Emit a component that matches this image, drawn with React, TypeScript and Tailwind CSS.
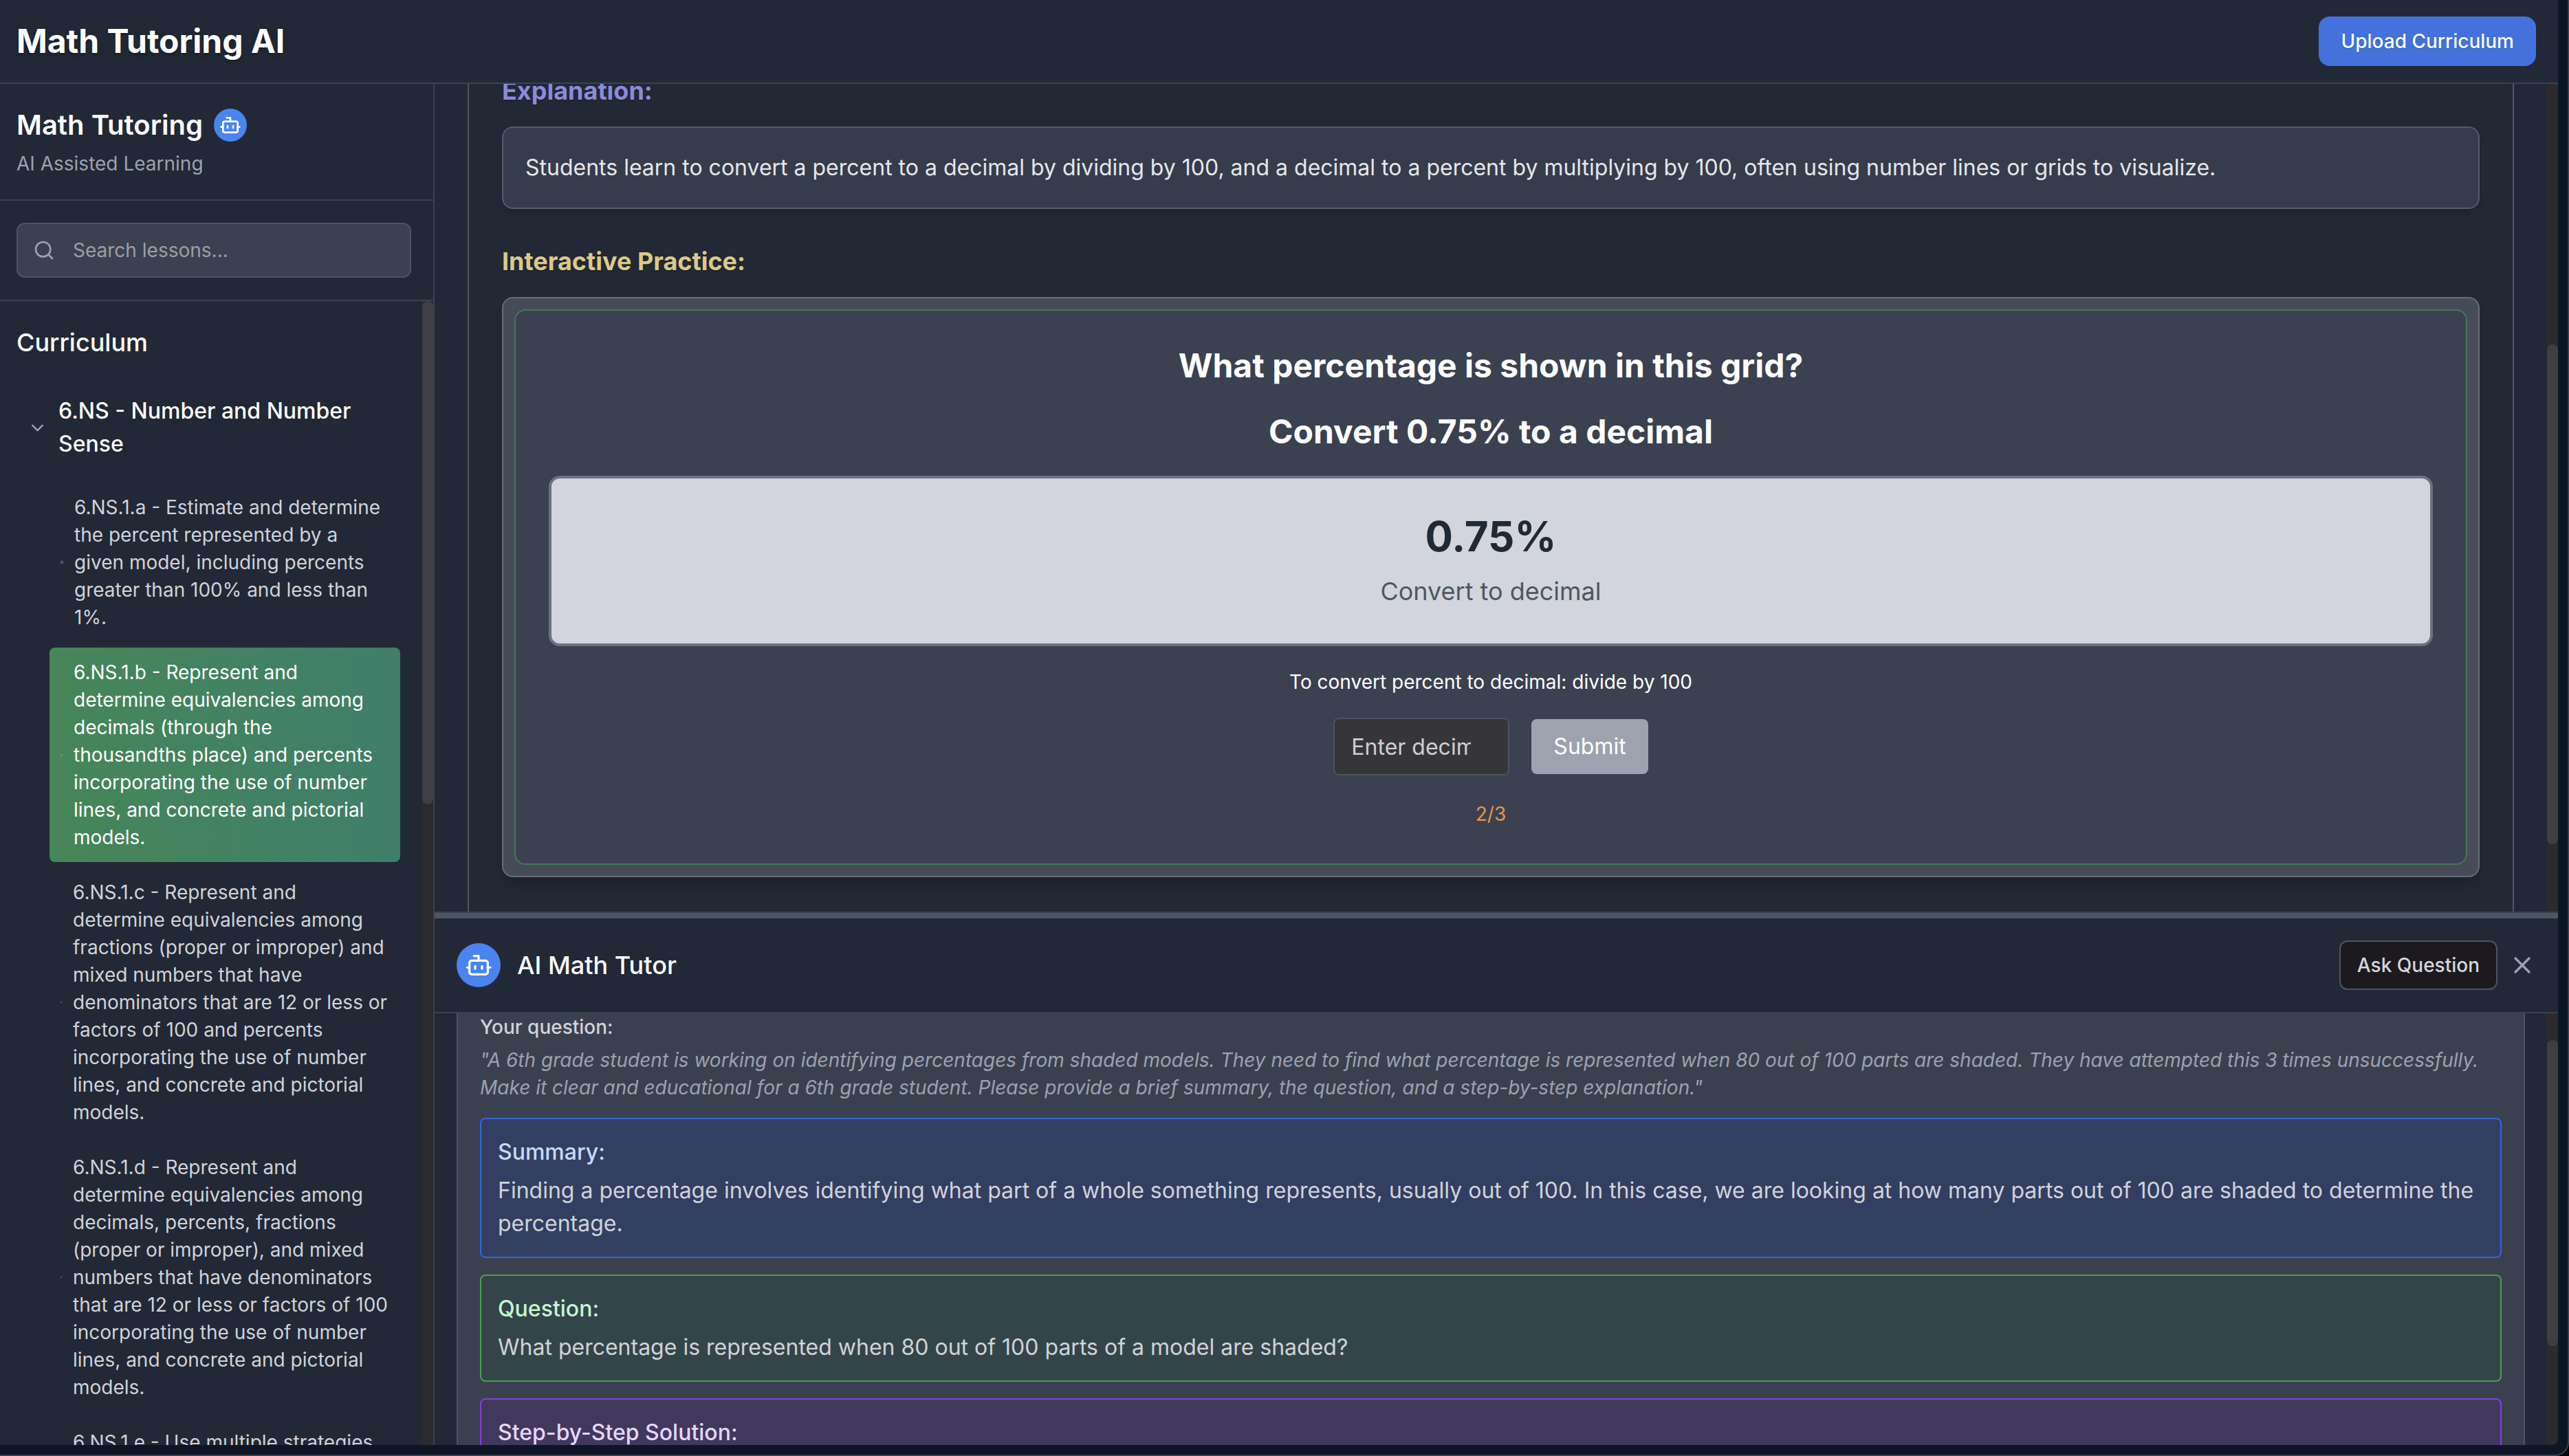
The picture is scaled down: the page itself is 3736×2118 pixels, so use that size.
import React from "react";
import { Bot, ChevronDown, Search, X } from "lucide-react";
import clsx from "clsx";

const lessons = [
  {
    text: "6.NS.1.a - Estimate and determine the percent represented by a given model, including percents greater than 100% and less than 1%.",
    dot: "size-1 border border-[#6b7280]",
  },
  {
    text: "6.NS.1.b - Represent and determine equivalencies among decimals (through the thousandths place) and percents incorporating the use of number lines, and concrete and pictorial models.",
    dot: "size-[3px] rounded-full border border-[#7fae8c]",
    active: true,
  },
  {
    text: "6.NS.1.c - Represent and determine equivalencies among fractions (proper or improper) and mixed numbers that have denominators that are 12 or less or factors of 100 and percents incorporating the use of number lines, and concrete and pictorial models.",
    dot: "size-0.5 bg-[#4b5563]",
  },
  {
    text: "6.NS.1.d - Represent and determine equivalencies among decimals, percents, fractions (proper or improper), and mixed numbers that have denominators that are 12 or less or factors of 100 incorporating the use of number lines, and concrete and pictorial models.",
    dot: "size-0.5 bg-[#4b5563]",
  },
  {
    text: "6.NS.1.e - Use multiple strategies to solve problems.",
    dot: "size-0.5 bg-[#4b5563]",
  },
];

function ScrollTrack({ before, thumb, after }: { before: number; thumb: number; after: number }) {
  return (
    <div className="flex w-4 shrink-0 flex-col bg-[#2c2a2e]" aria-hidden="true">
      <div style={{ flexGrow: before }} />
      <div className="rounded-full bg-[#403e42]" style={{ flexGrow: thumb }} />
      <div style={{ flexGrow: after }} />
    </div>
  );
}

function Sidebar() {
  return (
    <aside className="flex w-[632px] shrink-0 flex-col border-r-2 border-[#3a4150]">
      <div className="border-b-2 border-[#3a4150] py-8 pr-8 pl-6">
        <div className="flex items-center gap-4">
          <h2 className="text-[40px] leading-14 font-semibold">Math Tutoring</h2>
          <span className="flex size-12 items-center justify-center rounded-full bg-[#4a84ee]">
            <Bot className="size-8" />
          </span>
        </div>
        <p className="mt-2 text-[28px] leading-10 text-[#9ca2af]">AI Assisted Learning</p>
      </div>

      <div className="border-b-2 border-[#3a4150] py-8 pr-8 pl-6">
        <label className="flex h-20 items-center gap-[26px] rounded-xl border-2 border-[#4d5563] bg-[#3b4150] px-[22px]">
          <Search className="size-8 shrink-0 text-[#9ca2af]" />
          <input
            type="text"
            aria-label="Search lessons"
            placeholder="Search lessons..."
            className="min-w-0 flex-1 bg-transparent text-[28px] leading-10 outline-none placeholder:text-[#9c9ea4]"
          />
        </label>
      </div>

      <div className="flex min-h-0 flex-1">
        <nav className="min-w-0 flex-1 overflow-hidden pt-8 pr-8 pl-6">
          <h3 className="text-[36px] leading-14 font-medium">Curriculum</h3>
          <button type="button" className="mt-12 flex w-full items-center gap-4 pl-4 text-left">
            <ChevronDown className="size-[29px] shrink-0 text-[#9ca2af]" />
            <span className="text-[32px] leading-12 font-medium">6.NS - Number and Number Sense</span>
          </button>
          <ul className="mt-8 flex flex-col gap-2 pl-12">
            {lessons.map((lesson) => (
              <li key={lesson.text}>
                <button
                  type="button"
                  className={clsx(
                    "flex w-full items-center gap-4 rounded-lg p-4 text-left text-[28px] leading-10",
                    lesson.active
                      ? "bg-linear-to-r from-[#478657] to-[#407e6b] text-white"
                      : "text-[#d0d3d9]",
                  )}
                >
                  <span className={clsx("shrink-0", lesson.dot)} />
                  <span className="flex-1">{lesson.text}</span>
                </button>
              </li>
            ))}
          </ul>
        </nav>
        <ScrollTrack before={0} thumb={732} after={932} />
      </div>
    </aside>
  );
}

function Lesson() {
  return (
    <section className="flex min-h-0 flex-[1204_1_0%]">
      <div className="flex min-w-0 flex-1 overflow-hidden px-12">
        <div className="w-full border-x-2 border-[#505664] bg-[#222834] px-12">
          <h3 className="-mt-[18px] text-[36px] leading-14 font-bold text-[#8b8bdb] text-shadow-sm">Explanation:</h3>
          <p className="mt-6 rounded-2xl border-2 border-[#555b68] bg-[#363c4b] p-8 text-[32px] leading-[52px] text-[#e5e7eb] shadow-lg">
            Students learn to convert a percent to a decimal by dividing by 100, and a decimal to a percent by
            multiplying by 100, often using number lines or grids to visualize.
          </p>
          <h3 className="mt-12 text-[36px] leading-14 font-bold text-[#dcc98a] text-shadow-sm">
            Interactive Practice:
          </h3>
          <div className="mt-6 rounded-2xl border-2 border-[#666c78] bg-[#454b59] p-4 shadow-xl">
            <div className="flex flex-col items-center gap-8 rounded-2xl border-2 border-[#437a52] bg-[#3b4150] p-12 text-center">
              <h4 className="text-[48px] leading-16 font-bold">What percentage is shown in this grid?</h4>
              <h4 className="text-[48px] leading-16 font-bold">Convert 0.75% to a decimal</h4>
              <div className="w-full rounded-2xl border-4 border-[#6b7280] bg-[#d2d5dd] p-12">
                <div className="text-[60px] leading-18 font-bold text-[#222936]">0.75%</div>
                <div className="mt-4 text-[36px] leading-14 text-[#4e5663]">Convert to decimal</div>
              </div>
              <p className="text-[28px] leading-10">To convert percent to decimal: divide by 100</p>
              <form className="flex items-center gap-8" onSubmit={(e) => e.preventDefault()}>
                <input
                  type="text"
                  inputMode="decimal"
                  aria-label="Decimal answer"
                  placeholder="Enter decimal"
                  className="h-21 w-64 rounded-lg border-2 border-[#4b5261] bg-[#363639] pr-[54px] pl-6 text-[32px] placeholder:text-[#cfcfd2]"
                />
                <button type="submit" className="h-20 rounded-lg bg-[#9da2ae] px-8 text-[32px]">
                  Submit
                </button>
              </form>
              <p className="text-[28px] leading-12 text-[#e9944d]">2/3</p>
            </div>
          </div>
        </div>
      </div>
      <ScrollTrack before={379} thumb={727} after={98} />
    </section>
  );
}

function Tutor() {
  return (
    <section className="flex min-h-0 flex-[776_1_0%] flex-col">
      <div className="h-0.5 shrink-0 bg-[#3a4150]" />
      <div className="h-2 shrink-0 cursor-row-resize bg-[#4d5563]" />
      <header className="flex h-[138px] shrink-0 items-center border-b-2 border-[#3a4150] px-8">
        <span className="flex size-16 items-center justify-center rounded-full bg-[#4a84ee]">
          <Bot className="size-10" />
        </span>
        <h2 className="ml-6 flex-1 text-[36px] leading-14 font-medium">AI Math Tutor</h2>
        <button
          type="button"
          className="h-18 rounded-xl border-2 border-[#4d5563] bg-[#1c1a1f] px-6 text-[28px] font-medium text-[#d5d7dc]"
        >
          Ask Question
        </button>
        <button type="button" aria-label="Close" className="ml-4 text-[#9ca2af]">
          <X className="size-10" />
        </button>
      </header>
      <div className="flex min-h-0 flex-1">
        <div className="min-w-0 flex-1 overflow-hidden px-8">
          <div className="flex flex-col gap-6 border-x-2 border-[#4d5563] bg-[#3b404f] px-8">
            <div className="text-[28px] leading-10">
              <h3 className="font-medium text-[#d0d3d9]">Your question:</h3>
              <p className="mt-2 text-[#9ca2af] italic">
                "A 6th grade student is working on identifying percentages from shaded models. They need to find what
                percentage is represented when 80 out of 100 parts are shaded. They have attempted this 3 times
                unsuccessfully. Make it clear and educational for a 6th grade student. Please provide a brief summary,
                the question, and a step-by-step explanation."
              </p>
            </div>
            <div className="rounded-lg border-2 border-[#3566df] bg-[#333f61] p-6 text-[32px] leading-12">
              <h4 className="font-medium text-[#c3dbfb]">Summary:</h4>
              <p className="mt-2 text-[#d0d3d9]">
                Finding a percentage involves identifying what part of a whole something represents, usually out of
                100. In this case, we are looking at how many parts out of 100 are shaded to determine the percentage.
              </p>
            </div>
            <div className="rounded-lg border-2 border-[#4aa053] bg-[#344549] p-6 text-[32px] leading-12">
              <h4 className="font-medium text-[#c5f6d1]">Question:</h4>
              <p className="mt-2 text-[#d0d3d9]">
                What percentage is represented when 80 out of 100 parts of a model are shaded?
              </p>
            </div>
            <div className="rounded-lg border-2 border-[#8042dd] bg-[#41385e] p-6 text-[32px] leading-12">
              <h4 className="font-medium text-[#e6d6fc]">Step-by-Step Solution:</h4>
            </div>
          </div>
        </div>
        <ScrollTrack before={39} thumb={445} after={144} />
      </div>
    </section>
  );
}

export default function App() {
  return (
    <div className="h-screen bg-black font-['Inter',sans-serif] text-white">
      <div className="flex h-full overflow-hidden rounded-br-[20px] border-r-2 border-b-2 border-[#3e404a] bg-[#0f1524] pr-[14px] pb-[14px]">
        <div className="flex min-w-0 flex-1 flex-col overflow-hidden rounded-br-lg bg-[#222835]">
          <header className="flex h-[122px] shrink-0 items-center justify-between border-b-2 border-[#3a4150] pr-8 pl-6">
            <h1 className="text-[48px] leading-16 font-bold text-shadow-lg">Math Tutoring AI</h1>
            <button
              type="button"
              className="h-18 rounded-2xl bg-[#4372dc] px-8 text-[28px] font-medium text-shadow-sm"
            >
              Upload Curriculum
            </button>
          </header>
          <div className="flex min-h-0 flex-1">
            <Sidebar />
            <main className="flex min-w-0 flex-1 flex-col">
              <Lesson />
              <Tutor />
            </main>
          </div>
        </div>
      </div>
    </div>
  );
}
